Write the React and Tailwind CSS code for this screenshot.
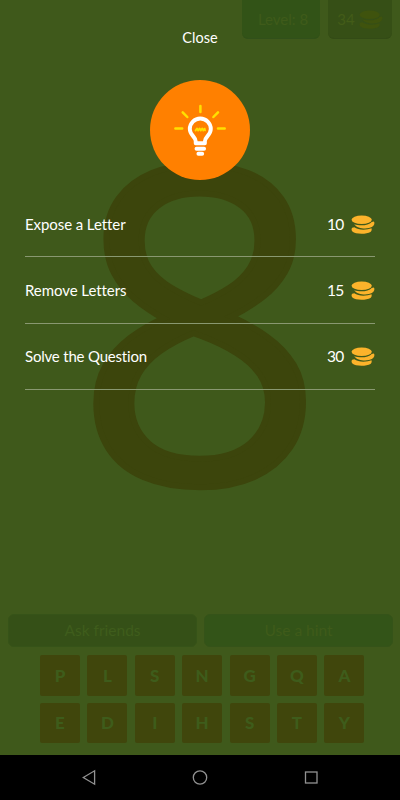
import React from "react";

const ROWS = [
  ["P", "L", "S", "N", "G", "Q", "A"],
  ["E", "D", "I", "H", "S", "T", "Y"],
];

const HINTS = [
  { label: "Expose a Letter", price: 10, spacing: "tracking-[-0.08px]" },
  { label: "Remove Letters", price: 15, spacing: "tracking-[-0.06px]" },
  { label: "Solve the Question", price: 30, spacing: "tracking-[-0.2px]" },
];

function Coins({ className }) {
  return (
    <svg viewBox="0 0 24 19" className={className} fill="currentColor">
      <ellipse cx="10.7" cy="4.7" rx="10.1" ry="4.3" />
      <path d="M3.2 9.2C8 11 17.5 11 20.7 7L22.9 6.5C24 8.2 23.4 10.5 20.9 12C17 14.2 6.6 14.2 3.2 9.2Z" />
      <path d="M1.2 12.7C.3 13.6 .3 15.4 1.4 16.5C4.3 19.4 15.6 19.4 19.4 16.9C20.7 16 20.9 14.6 20.5 13.2C16.4 15 7.5 15.6 3.3 12.3Z" />
    </svg>
  );
}

function Bulb() {
  return (
    <svg viewBox="0 0 60 60" className="h-15 w-15" fill="none" strokeLinecap="round">
      <g stroke="#ffe000" strokeWidth="2.5">
        <path d="M30.4 5.9V12.1M12.7 12.3L17.3 17M48 12.3L43.4 17M5.4 28.6H12.2M48 28.6H54.7" />
        <path d="M25.5 30.6L27.1 28.4L28.1 30.6L29.7 28.4L30.7 30.6L32.3 28.4L33.3 30.6L34.7 28.6L35.1 30.4" strokeWidth="1.8" strokeLinejoin="round" />
      </g>
      <g stroke="#fff" strokeWidth="3.9">
        <path d="M25.7 43.2V41.3C25.7 36.7 19.8 35.2 19.8 29A10.5 10.5 0 0 1 40.8 29C40.8 35.2 34.9 36.7 34.9 41.3V43.2Z" strokeLinejoin="round" />
        <path d="M26.5 48.8H34.1M28.4 53.8H32.2" />
      </g>
    </svg>
  );
}

function GameScreen() {
  return (
    <div className="flex h-[755px] flex-col">
      <div className="flex h-[39px] justify-end gap-2 pr-2">
        <div className="flex w-[78px] items-center justify-center rounded-b-md border-b border-[#31501a] bg-[#325317] pl-1 text-[15px] text-[#3f5b1a]">
          Level: 8
        </div>
        <div className="flex w-[64px] items-center justify-center gap-1 rounded-b-md border-b border-[#334b16] bg-[#364f16] text-[15px] text-[#435c18]">
          34
          <Coins className="h-[19px] w-6 text-[#3f530d]" />
        </div>
      </div>
      <div className="flex flex-1 items-center justify-center pb-[27px]">
        <span className="block font-['Open_Sans',sans-serif] text-[440px] leading-none font-medium text-[#3c450c] [-webkit-text-stroke:6px_#3c450c]">8</span>
      </div>
      <div className="flex h-[33px] justify-center gap-[7px] pl-px text-[15.5px]">
        <div className="flex w-[189px] items-center justify-center rounded-md border border-[#365318] bg-[#355017] text-[#3f5d1c]">
          Ask friends
        </div>
        <div className="flex w-[189px] items-center justify-center rounded-md border border-[#355319] bg-[#335418] text-[#3f5b1a]">
          Use a hint
        </div>
      </div>
      <div className="mt-2 mb-3 flex flex-col gap-[7px] pl-10">
        {ROWS.map((row, i) => (
          <div key={i} className="flex gap-[7.4px]">
            {row.map((letter) => (
              <div
                key={letter}
                className="flex h-[40.5px] w-10 items-center justify-center rounded-xs bg-[#40460c] text-[17px] font-black text-[#3e5c1b]"
              >
                {letter}
              </div>
            ))}
          </div>
        ))}
      </div>
    </div>
  );
}

function HintDialog() {
  return (
    <div className="absolute inset-x-0 top-0 flex h-[755px] flex-col items-center px-[25px] pt-[27px] text-white">
      <button className="h-[22px] text-[14.5px] leading-[22px]">Close</button>
      <div className="mt-[31px] flex h-[100px] w-[100px] shrink-0 items-center justify-center rounded-full bg-[#ff8000]">
        <Bulb />
      </div>
      <ul className="mt-[11px] w-full">
        {HINTS.map(({ label, price, spacing }) => (
          <li key={label} className="flex h-[66.3px] items-center border-b border-[#899871] pt-[1px] text-[15px]">
            <span className={`flex-1 ${spacing}`}>{label}</span>
            <span className="mr-[7.5px] text-[15.5px] tracking-[-0.8px]">{price}</span>
            <Coins className="h-[19px] w-6 text-[#fcb32b]" />
          </li>
        ))}
      </ul>
    </div>
  );
}

function NavBar() {
  return (
    <div className="flex h-[45px] items-center bg-black">
      <svg viewBox="0 0 400 45" className="h-[45px] w-full" fill="none" stroke="#929292" strokeWidth="1.3">
        <path d="M83.3 22.5L94.6 15.8V29.2Z" />
        <circle cx="200" cy="22.5" r="6.7" />
        <rect x="305.5" y="17" width="11.5" height="11" />
      </svg>
    </div>
  );
}

export default function App() {
  return (
    <div className="relative h-[800px] w-[400px] overflow-hidden bg-[#3f591b] font-['Gill_Sans','Lato',sans-serif] [font-variant-ligatures:none]">
      <GameScreen />
      <NavBar />
      <HintDialog />
    </div>
  );
}
